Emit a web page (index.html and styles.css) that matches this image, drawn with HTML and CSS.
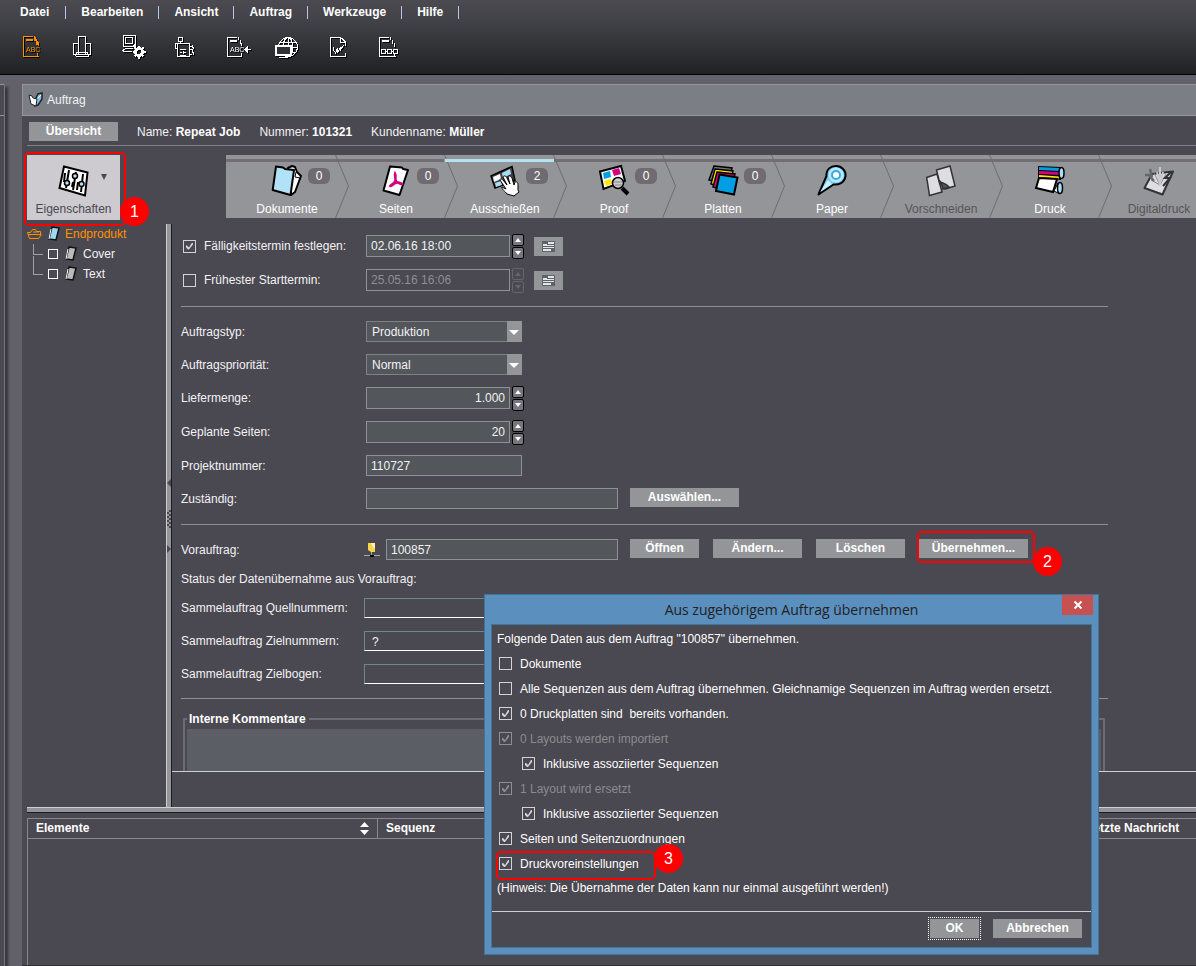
FILE: index.html
```html
<!DOCTYPE html>
<html lang="de">
<head>
<meta charset="utf-8">
<title>Auftrag</title>
<link rel="stylesheet" href="styles.css">
</head>
<body>
<header class="app-header">
  <nav class="menu">
    <button>Datei</button><button>Bearbeiten</button><button>Ansicht</button><button>Auftrag</button><button>Werkzeuge</button><button>Hilfe</button>
  </nav>
  <div class="toolbar">
    <button class="tool active" aria-label="Auftrag"><svg viewBox="0 0 26 24"><path d="M14 1.500H4.500v20H20M18.500 18v3M15.500 1v4M17.500 4v4M19.500 7v4"/><path d="M7 5h7M16 2v4M18 6v4" stroke-width="2"/><text x="7" y="17">ABC</text></svg></button>
    <button class="tool" aria-label="Stapel"><svg viewBox="0 0 26 24"><path d="M8.500 19V1.500h7V19M8 8.500H3.500v11h17v-11H16M5.500 21.500h13M6.500 19v-1.500h11V19M5.500 20v1M18.500 20v1"/></svg></button>
    <button class="tool" aria-label="System"><svg viewBox="0 0 26 24"><path d="M2.500 .500h12v11h-12zM4.500 2.500h7v6h-7zM14.500 9l-2 2M3.500 13.500h8M1.500 16.500h9M3.500 14l-2 2"/><circle cx="18" cy="17" r="3.500" stroke-width="3"/><path d="M18 10.500v3M18 20.500v3M11.500 17h3M21.500 17h3M13.500 12.500l2 2M20.500 19.500l2 2M13.500 21.500l2-2M20.500 14.500l2-2" stroke-width="2"/></svg></button>
    <button class="tool" aria-label="Maschine"><svg viewBox="0 0 26 24"><path d="M6.500 2.500h4v4h-4zM3 8.500h15M5.500 9v12.500h12V9M3.500 9v4h2M8 14.500h6M8 17.500h2M12 17.500h2M8 20.500h6M11 16v3M18 11.500h2M20.500 10v3M18 14.500h2M20.500 14v4M18 19.500h2M21.500 12v2M21.500 17v3M8.500 6v3"/></svg></button>
    <button class="tool" aria-label="Import"><svg viewBox="0 0 26 24"><path d="M14 2.500H4.500v19H19M18.500 18v3M15.500 2v3M17.500 5v4M18.500 8v3M21 14.500h7M24.500 11v7M23.500 12v5M22.500 13v3"/><path d="M7 6h7" stroke-width="2"/><text x="7" y="17">ABC</text></svg></button>
    <button class="tool" aria-label="Portal"><svg viewBox="0 0 26 24"><circle cx="14" cy="12" r="9.500"/><ellipse cx="14" cy="12" rx="5" ry="9.500"/><path d="M14 2v20M6 7.500h16M5 12h19M8 17.500h14"/><path d="M2 11h15v9H2z" fill="#303135" stroke-width="2"/><path d="M5 22.500h9"/></svg></button>
    <button class="tool" aria-label="Bericht"><svg viewBox="0 0 26 24"><path d="M15 2.500H5.500v19h15V18M15.500 2v5.500h5M16 3.500h1v1h1v1h1v1h1v4"/><path d="M8.500 12v3l2 3 2-5v5l3-6v3l3-5"/></svg></button>
    <button class="tool" aria-label="Ablauf"><svg viewBox="0 0 26 24"><path d="M13 2.500H3.500v19h16M14.500 2v3M16.500 5v4M18.500 8v4M5.500 14.500h4v4h-4zM11.500 14.500h4v4h-4zM17.500 14.500h4v4h-4zM9 16.500h3M15 16.500h3M18.500 19v2"/><path d="M6 6h7" stroke-width="2"/></svg></button>
  </div>
</header>

<div class="workspace">
  <aside class="side-strip"><div class="side-strip-head"></div></aside>
  <main class="job">
    <h1 class="job-title"><svg viewBox="0 0 16 16" width="16" height="16"><path d="M8 6l2-4 4-1v6l-4 6-3 1z" fill="#7cc4e8" stroke="#222" stroke-width="1.500"/><path d="M1 3l3 1 1 2 4 1-1 7-5-2z" fill="#fff" stroke="#222"/><path d="M10 6l3-3" stroke="#fff"/></svg>Auftrag</h1>
    <div class="job-info">
      <button class="btn w-90">Übersicht</button>
      <span>Name: <b>Repeat Job</b></span><span>Nummer: <b>101321</b></span><span>Kundenname: <b>Müller</b></span>
    </div>
    <div class="stages">
      <div class="marked prop-wrap">
        <button class="prop">
          <svg viewBox="0 0 32 32"><path d="M6 2.500l23.500 6-2.500 23L1.500 24z" fill="#fff" stroke="#000" stroke-width="2"/><path d="M11 6L8 24M18 8l-3 18M25 10l-2 18M7 9l-1 9M15 18l-1 5M20 18l-1 8" stroke="#000" stroke-width="2"/><g fill="#b5e2f8" stroke="#000" stroke-width="1.500"><circle cx="9" cy="19" r="2.500"/><circle cx="17" cy="12" r="2.500"/><circle cx="23.500" cy="20" r="2.500"/></g></svg>
          <span class="caret"></span>
          <span>Eigenschaften</span>
        </button>
        <span class="pin pin-1">1</span>
      </div>
      <div class="steps">
        <button class="step"><svg viewBox="0 0 32 32"><path d="M17 4l4-2 3 1 2 5 4 4-6 16-4 3z" fill="#fff" stroke="#000" stroke-width="2" stroke-linejoin="round"/><path d="M25 8l-1 5 5 1" stroke="#000" fill="none"/><path d="M5 2.500l7 1 2 1.500 9 1L19.500 31 1.700 26z" fill="#b2e2f8" stroke="#000" stroke-width="2" stroke-linejoin="round"/></svg><span>Dokumente</span><i class="count">0</i></button>
        <button class="step"><svg viewBox="0 0 32 32"><path d="M10 2.500l12 1 1 1.500 5 1-8.500 25-16-4.500z" fill="#fff" stroke="#000" stroke-width="2" stroke-linejoin="round"/><path d="M15 9c-1 3 1 5 0 8-1 3-4 3-5 5 2 1 3-2 6-3 3-1 4 2 6 1-1-2-3-1-5-2-3-2 0-6-2-9z" fill="none" stroke="#d6007f" stroke-width="2"/></svg><span>Seiten</span><i class="count">0</i></button>
        <button class="step current"><svg viewBox="0 0 32 32"><path d="M2 12L23 2.500l3 14L6 24z" fill="#444" stroke="#000" stroke-width="1.500"/><path d="M4 13l7-3 1 5-7 3z" fill="#fff"/><path d="M13 9l8-4 1 5-8 4z" fill="#a9dcf5"/><path d="M6 19l6-2 1 4-6 2z" fill="#a9dcf5"/><path d="M18 30c-2-3-6-5-5-7l4 2-6-9c0-2 2-1 3 0l4 5-4-8c1-2 3-1 4 1l3 6-2-7c1-2 3-1 4 1l2 7 1-3c2-1 3 1 3 3v5l1 2-5 4z" fill="#fff" stroke="#000"/></svg><span>Ausschießen</span><i class="count">2</i></button>
        <button class="step"><svg viewBox="0 0 32 32"><path d="M2 7.500L23 2l4 15-21.500 8z" fill="#fff" stroke="#000" stroke-width="2"/><path d="M5 9l7-2 1 6-7 2z" fill="#009fe3"/><path d="M14 6l7-2 2 6-7 2z" fill="#d6007f"/><path d="M6 17l7-2 1 5-6 2z" fill="#ffe900"/><circle cx="20" cy="19" r="5.500" fill="#ccc" stroke="#000" stroke-width="1.500"/><path d="M16 18h8M17 21h7" stroke="#888"/><path d="M24 24l6 6" stroke="#000" stroke-width="4"/></svg><span>Proof</span><i class="count">0</i></button>
        <button class="step"><svg viewBox="0 0 32 32" stroke="#000" stroke-width="1.500"><path d="M7 2l18 2-4 16L2 16z" fill="#777"/><path d="M8 5l18 2-4 17L4 20z" fill="#ffe900"/><path d="M10 8l18 2-4 18L6 23z" fill="#d6007f"/><path d="M12.500 10.500l18 3L27 30.500 9 27z" fill="#009fe3" stroke-width="2"/></svg><span>Platten</span><i class="count">0</i></button>
        <button class="step"><svg viewBox="0 0 32 32"><path d="M2.500 30.500L10.500 12C10 5 15 2 20 2c6 0 10 5 9.500 10-1 7-7 9-12 8.500z" fill="#79cdf3" stroke="#000" stroke-width="2" stroke-linejoin="round"/><path d="M4 28l8-12 4 4z" fill="#c9efff"/><circle cx="20" cy="11" r="7.500" fill="#b9e8fc"/><circle cx="20" cy="11" r="4" fill="#fff" stroke="#36a9e1" stroke-width="2"/></svg><span>Paper</span></button>
        <button class="step off"><svg viewBox="0 0 32 32" fill="#dddde3" stroke="#333" stroke-width="1.500"><path d="M1.700 13.500L12 10l5 18-12.500 3.500z"/><path d="M11.500 6L25 2l5 20-10 3-6-9z"/><path d="M14 17c3 3 6 1 10 6l-6 2-1-4z" fill="#555"/></svg><span>Vorschneiden</span></button>
        <button class="step"><svg viewBox="0 0 32 32"><path d="M4 2l23 1v13L4 13z" fill="#000"/><path d="M5 4.500l21 1" stroke="#009fe3" stroke-width="3"/><path d="M5 8.500l21 1" stroke="#d6007f" stroke-width="3"/><path d="M5 12l20 1.500" stroke="#ffe900" stroke-width="2"/><ellipse cx="27.500" cy="9" rx="2.500" ry="5.500" fill="#a9dcf5" stroke="#000" stroke-width="1.500"/><path d="M5 14l18 1-4 13-17-4z" fill="#fff" stroke="#000" stroke-width="2"/><path d="M20 27l4-8 2 11z" fill="#fff" stroke="#000"/><ellipse cx="26" cy="24" rx="2.500" ry="5.500" fill="#a9dcf5" stroke="#000" stroke-width="1.500"/></svg><span>Druck</span></button>
        <button class="step off"><svg viewBox="0 0 32 32"><path d="M9 10l21-2.500-10.500 23L1.500 24z" fill="#dddde3" stroke="#333" stroke-width="2" stroke-linejoin="round"/><path d="M17 21l-6-12M17 21l6-11M17 21l-9-5" stroke="#888" fill="none"/><path d="M2 11h4l5 6M7 5l2 8" stroke="#666" stroke-width="2.500" fill="none"/><path d="M17 3v18M14 8l3 11 3-11" stroke="#c9c9cd" stroke-width="2" fill="none"/><path d="M28 8l-6 6h5l-7 8" stroke="#333" stroke-width="2" fill="none"/></svg><span>Digitaldruck</span></button>
      </div>
    </div>

    <div class="split">
      <ul class="tree">
        <li class="root"><svg viewBox="0 0 16 12" width="16" height="12"><path d="M2.500 10.500l-2-6h3l2-3h3l1 2h4v3M2.500 10.500h9l3-4H1M6 4h6" fill="none" stroke="#ff9100"/></svg><svg class="book" viewBox="0 0 14 16"><path d="M5 1l7 1-3 12-7-1z" fill="#9bd8f2" stroke="#111" stroke-width="1.500"/><path d="M4 3L2 13" stroke="#fff"/></svg>Endprodukt</li>
        <li class="leaf"><input type="checkbox" id="t1"><label for="t1"><svg class="book" viewBox="0 0 14 16"><path d="M5 1l7 1-3 12-7-1z" fill="#bbb" stroke="#111" stroke-width="1.500"/><path d="M4 3L2 13" stroke="#fff"/></svg>Cover</label></li>
        <li class="leaf"><input type="checkbox" id="t2"><label for="t2"><svg class="book" viewBox="0 0 14 16"><path d="M5 1l7 1-3 12-7-1z" fill="#bbb" stroke="#111" stroke-width="1.500"/><path d="M4 3L2 13" stroke="#fff"/></svg>Text</label></li>
      </ul>
      <div class="v-splitter"><i class="tri-l"></i><i class="grip"></i><i class="tri-r"></i></div>
      <form class="form">
        <div class="form-scroll">
        <section class="group">
          <div class="row tall"><span class="label"><input type="checkbox" id="due" checked><label for="due">Fälligkeitstermin festlegen:</label></span><input class="field num" aria-label="Fälligkeitstermin" value="02.06.16 18:00"><span class="spin"><button type="button" aria-label="mehr"></button><button type="button" aria-label="weniger"></button></span><button type="button" class="cal" aria-label="Kalender"><svg viewBox="0 0 13 11"><path d="M0 0h13v11H0z" fill="#5c636b"/><path d="M6 1h6v2H6zM1 3h4v1h7v1H1zM1 6h11v1H1zM1 8h8v2H1z" fill="#e3e5e8"/></svg></button></div>
          <div class="row tall disabled"><span class="label"><input type="checkbox" id="early"><label for="early">Frühester Starttermin:</label></span><input class="field num" aria-label="Starttermin" value="25.05.16 16:06" disabled><span class="spin"><button type="button" aria-label="mehr" disabled></button><button type="button" aria-label="weniger" disabled></button></span><button type="button" class="cal" aria-label="Kalender"><svg viewBox="0 0 13 11"><path d="M0 0h13v11H0z" fill="#5c636b"/><path d="M6 1h6v2H6zM1 3h4v1h7v1H1zM1 6h11v1H1zM1 8h8v2H1z" fill="#e3e5e8"/></svg></button></div>
        </section>
        <section class="group">
          <div class="row"><label class="label" for="typ">Auftragstyp:</label><span class="combo"><select id="typ"><option>Produktion</option></select></span></div>
          <div class="row"><label class="label" for="prio">Auftragspriorität:</label><span class="combo"><select id="prio"><option>Normal</option></select></span></div>
          <div class="row tall"><label class="label" for="qty">Liefermenge:</label><input class="field num right" id="qty" value="1.000"><span class="spin"><button type="button" aria-label="mehr"></button><button type="button" aria-label="weniger"></button></span></div>
          <div class="row tall"><label class="label" for="pages">Geplante Seiten:</label><input class="field num right" id="pages" value="20"><span class="spin"><button type="button" aria-label="mehr"></button><button type="button" aria-label="weniger"></button></span></div>
          <div class="row"><label class="label" for="proj">Projektnummer:</label><input class="field mid" id="proj" value="110727"></div>
          <div class="row"><label class="label" for="resp">Zuständig:</label><input class="field long" id="resp"><button type="button" class="btn w-109">Auswählen...</button></div>
        </section>
        <section class="group">
          <div class="row"><label class="label short" for="prev">Vorauftrag:</label><svg class="link-icon" viewBox="0 0 16 16"><path d="M4 1h7v9H7L4 8z" fill="#f7d547"/><path d="M7 1h4v6l-2-2z" fill="#fff3b8"/><path d="M7.500 10v3M0 13.500h16" stroke="#a8a8a8"/><path d="M6 13h4v2H6z" fill="#000"/></svg><input class="field prev" id="prev" value="100857"><span class="btns"><button type="button" class="btn w-69">Öffnen</button><button type="button" class="btn w-90">Ändern...</button><button type="button" class="btn w-90">Löschen</button><span class="marked take"><button type="button" class="btn w-109">Übernehmen...</button><span class="pin pin-2">2</span></span></span></div>
          <div class="row slim"><span>Status der Datenübernahme aus Vorauftrag:</span></div>
          <div class="row"><label class="label short" for="src">Sammelauftrag Quellnummern:</label><input class="sunken" id="src"></div>
          <div class="row"><label class="label short" for="dst">Sammelauftrag Zielnummern:</label><input class="sunken" id="dst" value="?"></div>
          <div class="row"><label class="label short" for="sheet">Sammelauftrag Zielbogen:</label><input class="sunken" id="sheet"></div>
        </section>
        <fieldset class="comments"><legend>Interne Kommentare</legend><textarea aria-label="Interne Kommentare"></textarea></fieldset>
        </div>
        <div class="form-foot"></div>
      </form>
    </div>
    <div class="h-splitter"></div>
    <div class="grid-wrap">
      <table class="grid">
        <colgroup><col class="c-el"><col class="c-seq"><col></colgroup>
        <thead><tr><th><span class="sort">Elemente<svg viewBox="0 0 9 13" width="9" height="13"><path d="M0 5l4.500-5L9 5zM0 8h9l-4.500 5z" fill="#fff"/></svg></span></th><th>Sequenz</th><th>Letzte Nachricht</th></tr></thead>
      </table>
    </div>
  </main>
</div>

<div class="dialog" role="dialog" aria-labelledby="dlg-title">
  <div class="dialog-bar"><h2 id="dlg-title">Aus zugehörigem Auftrag übernehmen</h2><button class="close" aria-label="Schließen"><svg viewBox="0 0 8 8" width="8" height="8"><path d="M0.500 0.500l7 7M7.500 0.500l-7 7" stroke="#fff" stroke-width="2"/></svg></button></div>
  <div class="dialog-body">
    <div class="options">
      <p>Folgende Daten aus dem Auftrag "100857" übernehmen.</p>
      <div class="opt"><input type="checkbox" id="o1"><label for="o1">Dokumente</label></div>
      <div class="opt"><input type="checkbox" id="o2"><label for="o2">Alle Sequenzen aus dem Auftrag übernehmen. Gleichnamige Sequenzen im Auftrag werden ersetzt.</label></div>
      <div class="opt"><input type="checkbox" id="o3" checked><label for="o3">0 Druckplatten sind&nbsp; bereits vorhanden.</label></div>
      <div class="opt"><input type="checkbox" id="o4" checked disabled><label for="o4">0 Layouts werden importiert</label></div>
      <div class="opt sub"><input type="checkbox" id="o5" checked><label for="o5">Inklusive assoziierter Sequenzen</label></div>
      <div class="opt"><input type="checkbox" id="o6" checked disabled><label for="o6">1 Layout wird ersetzt</label></div>
      <div class="opt sub"><input type="checkbox" id="o7" checked><label for="o7">Inklusive assoziierter Sequenzen</label></div>
      <div class="opt"><input type="checkbox" id="o8" checked><label for="o8">Seiten und Seitenzuordnungen</label></div>
      <div class="opt marked presets"><input type="checkbox" id="o9" checked><label for="o9">Druckvoreinstellungen</label><span class="pin pin-3">3</span></div>
      <p>(Hinweis: Die Übernahme der Daten kann nur einmal ausgeführt werden!)</p>
    </div>
    <div class="actions"><button class="btn w-49 default">OK</button><button class="btn w-90">Abbrechen</button></div>
  </div>
</div>
</body>
</html>
```
FILE: styles.css
```css
* { box-sizing: border-box; }
body {
  margin: 0;
  height: 100vh;
  display: flex;
  flex-direction: column;
  overflow: hidden;
  position: relative;
  background: #626069;
  color: #f2f2f4;
  font: 12px/16px "Liberation Sans", Arial, sans-serif;
}
button, input, select, textarea { font: inherit; color: inherit; margin: 0; border-radius: 0; }
button { border: 0; padding: 0; background: none; white-space: nowrap; }
svg { display: block; overflow: visible; flex: none; }
h1, h2, p, ul { margin: 0; padding: 0; font: inherit; list-style: none; }

.app-header {
  flex: none;
  height: 75px;
  background: linear-gradient(#4b4a51, #3f4045 35%, #1f2123);
  border-bottom: 1px solid #000;
}
.menu { display: flex; padding: 6px 0 0 5px; }
.menu button {
  height: 13px;
  line-height: 13px;
  padding: 0 15px;
  border-right: 1px solid #b7c4ee;
  font-weight: bold;
  color: #fff;
}
.menu button:first-child { padding-right: 16px; }
.toolbar { display: flex; padding: 16px 0 0 6px; }
.tool { width: 51px; display: flex; padding-left: 13px; }
.tool svg { width: 26px; height: 24px; fill: none; stroke: #fff; shape-rendering: crispEdges; filter: drop-shadow(1px 1px 0 #000); }
.tool.active svg { stroke: #ff9100; }
.tool text { font: 7px "Liberation Sans", Arial, sans-serif; fill: #fff; stroke: none; }
.tool.active text { fill: #ff9100; }

.workspace { flex: 1; min-height: 0; display: flex; padding-top: 9px; }
.side-strip {
  width: 5px;
  margin-right: 17px;
  background: #4a4850;
  border-right: 1px solid #77767b;
  box-shadow: 3px 3px 3px #35343a;
}
.side-strip-head { height: 32px; border: 1px solid #96979b; border-width: 1px 0; }
.job { flex: 1; min-width: 0; display: flex; flex-direction: column; background: #4a4850; border-bottom: 1px solid #333236; }
.job-title {
  flex: none;
  height: 32px;
  display: flex;
  align-items: center;
  gap: 3px;
  padding-left: 5px;
  background: #7b7e85;
  border: 1px solid #96979b;
  border-right: 0;
}
.job-info {
  flex: none;
  height: 30px;
  margin-left: 5px;
  padding: 3px 0 0 2px;
  display: flex;
  align-items: center;
  gap: 19px;
  border-bottom: 1px solid #807f84;
}
.job-info .btn { margin-bottom: 2px; }
.job-info b { color: #fff; }
.btn { height: 19px; line-height: 19px; background: #949599; color: #fff; font-weight: bold; text-align: center; flex: none; }
.w-49 { width: 49px; }
.w-69 { width: 69px; }
.w-90 { width: 89px; }
.w-109 { width: 109px; }

.stages { flex: none; display: flex; margin: 9px 0 0 5px; height: 69px; }
.marked { position: relative; }
.marked::after {
  content: "";
  position: absolute;
  inset: -3px -6px;
  border: 2px solid #f00;
  border-radius: 5px;
  pointer-events: none;
}
.pin {
  position: absolute;
  z-index: 1;
  width: 29px;
  height: 29px;
  border-radius: 50%;
  background: #f00;
  color: #fff;
  font: 16px/29px "Liberation Sans", Arial, sans-serif;
  text-align: center;
}
.prop-wrap { width: 93px; height: 65px; margin-right: 106px; }
.prop-wrap::after { inset: -3px -6px -6px -3px; }
.pin-1 { right: -29px; bottom: -6px; }
.prop {
  position: relative;
  width: 100%;
  height: 100%;
  background: #cdcbd0;
  color: #4a4850;
  display: flex;
  flex-direction: column;
  align-items: center;
  padding-top: 9px;
}
.prop svg, .step svg { width: 32px; height: 32px; margin-bottom: 5px; }
.caret { position: absolute; left: 74px; top: 19px; border: solid transparent; border-width: 6px 3px 0; border-top-color: #4a4850; }
.steps { flex: 1; min-width: 0; display: flex; height: 63px; overflow: hidden; background: #949599; }
.step {
  position: relative;
  flex: none;
  width: 109px;
  height: 63px;
  padding: 9px 0 0 13px;
  display: flex;
  flex-direction: column;
  align-items: center;
  background: linear-gradient(#726e72, #726e72) 0 4px / 100% 3px no-repeat;
  color: #fff;
}
.step.current { background: none; z-index: 1; }
.step.current::after { content: ""; position: absolute; left: 1px; right: -1px; top: 4px; height: 3px; background: #b5e2f2; }
.step.off { color: #56545b; }
.step + .step::before {
  content: "";
  position: absolute;
  left: 0;
  top: 0;
  width: 14px;
  height: 63px;
  background: #6d6b72;
  clip-path: polygon(0 0, 1px 0, 14px 31px, 1px 63px, 0 63px, 13px 31px);
}
.count {
  position: absolute;
  left: 82px;
  top: 13px;
  width: 22px;
  height: 16px;
  border-radius: 6px;
  background: #6f6b70;
  font-style: normal;
  text-align: center;
}

.split { flex: none; display: flex; height: 583px; margin-left: 5px; }
.tree { width: 139px; flex: none; }
.tree li { display: flex; align-items: center; height: 20px; position: relative; }
.root { color: #ff9100; gap: 4px; }
.book { width: 14px; height: 16px; }
.leaf { padding-left: 21px; }
.leaf label { display: flex; align-items: center; gap: 5px; margin-left: 6px; }
.leaf::before { content: ""; position: absolute; left: 6px; top: -8px; width: 9px; height: 18px; border: 1px solid #a0a0a4; border-width: 0 0 1px 1px; }
.root + .leaf::before { top: 0; height: 10px; }
.v-splitter {
  flex: none;
  width: 6px;
  display: flex;
  flex-direction: column;
  align-items: center;
  padding-top: 255px;
  background: #949599;
  border-left: 1px solid #d0ced2;
  border-right: 1px solid #1c1c1f;
}
.tri-l { border: 4px solid transparent; border-left: 0; border-right-color: #4a4850; }
.tri-r { border: 4px solid transparent; border-right: 0; border-left-color: #4a4850; }
.grip { width: 4px; height: 18px; margin: 23px 0 17px; background: repeating-conic-gradient(#4a4850 0 25%, #949599 0 50%) 0 0 / 4px 4px; }

input[type="checkbox"] {
  appearance: none;
  flex: none;
  width: 13px;
  height: 13px;
  border: 1px solid #d3d2d6;
  position: relative;
}
.leaf input[type="checkbox"] { width: 10px; height: 10px; border-color: #fff; }
input[type="checkbox"]:checked::before {
  content: "";
  position: absolute;
  inset: 2px;
  background: #d3d2d6;
  clip-path: polygon(0 3px, 1px 3px, 3px 5px, 6px 0, 7px 0, 7px 2px, 3px 7px, 2px 7px, 0 5px);
}
input[type="checkbox"]:disabled { opacity: 0.5; }
input[type="checkbox"]:disabled + label { color: #8c8b91; }

.form { flex: 1; min-width: 0; display: flex; flex-direction: column; }
.form-scroll { flex: 1; min-height: 0; overflow: hidden; padding-left: 9px; border-bottom: 1px solid #d0ced2; }
.form-foot { flex: none; height: 35px; }
.group { margin-right: 88px; padding: 8px 0; border-bottom: 1px solid #8f8e93; }
.group:first-child { padding-top: 5px; }
.group:nth-child(-n+2) { padding-bottom: 9px; }
.row { display: flex; align-items: center; height: 33px; }
.row.tall { height: 34px; }
.row.slim { height: 25px; }
.label { width: 185px; flex: none; display: flex; align-items: center; white-space: nowrap; }
.label input { margin: 0 8px 0 2px; }
.label.short { width: 183px; }
.field {
  height: 21px;
  padding: 0 4px;
  background: #53565a;
  border: 1px solid #8f9094;
  outline: 0;
}
.num { width: 144px; height: 22px; }
.mid { width: 156px; }
.long { width: 252px; margin-right: 12px; }
.prev { width: 232px; margin-right: 12px; }
.row .btn { margin-bottom: 2px; }
.right { text-align: right; }
.disabled .field { background: #4a4850; color: #8f8e94; }
.spin { display: flex; flex-direction: column; gap: 1px; margin-left: 2px; }
.spin button { width: 12px; height: 12px; border: 1px solid #000; border-radius: 2px; background: #77757d; display: grid; place-items: center; }
.spin button::before { content: ""; border: 3px solid transparent; border-top: 0; border-bottom: 4px solid #fff; }
.spin button + button::before { border-bottom: 0; border-top: 4px solid #fff; }
.spin button:disabled { background: none; border-color: #66656c; }
.spin button:disabled::before { border-bottom-color: #66656c; border-top-color: #66656c; }
.cal { width: 29px; height: 19px; margin-left: 10px; background: #949599; display: grid; place-items: center; }
.cal svg { width: 13px; height: 11px; }
.combo { position: relative; width: 156px; height: 21px; }
.combo select { appearance: none; width: 100%; height: 100%; padding: 0 20px 0 5px; background: #53565a; border: 1px solid #808186; }
.combo::before { content: ""; position: absolute; right: 0; top: 0; width: 15px; height: 21px; background: #949599; pointer-events: none; }
.combo::after { content: ""; position: absolute; right: 3px; top: 9px; border: 5px solid transparent; border-bottom: 0; border-top-color: #fff; pointer-events: none; }
.link-icon { width: 16px; height: 16px; margin-right: 6px; }
.btns { display: flex; gap: 14px; }
.btns .take { display: flex; }
.take::after { inset: -8px -7px -3px -2px; }
.pin-2 { right: -34px; top: 8px; }
.sunken { width: 254px; height: 20px; padding: 2px 7px 0; background: none; border: 1px solid #6f8590; border-bottom-color: #fff; outline: 0; }
.comments { margin: 13px 91px 0 2px; padding: 3px 2px 0; border: 2px solid #6d6c72; height: 140px; min-width: 0; }
.comments legend { margin: 0; padding: 0 3px 0 2px; font-weight: bold; color: #fff; line-height: 14px; }
.comments textarea { display: block; width: 100%; height: 120px; border: 0; background: #5b5e65; resize: none; }

.h-splitter { flex: none; height: 6px; margin-left: 5px; background: #949599; border-top: 1px solid #d0ced2; border-bottom: 1px solid #1c1c1f; }
.grid-wrap { flex: 1; min-height: 0; margin: 5px 0 0 5px; border: 1px solid #88878c; border-width: 1px 0 0 1px; }
.grid { width: 100%; table-layout: fixed; border-collapse: separate; border-spacing: 0; }
.grid th { height: 20px; padding: 0 8px; text-align: left; color: #fff; border-bottom: 1px solid #88878c; border-right: 1px solid #88878c; line-height: 19px; white-space: nowrap; }
.grid th:last-child { border-right: 0; }
.c-el { width: 350px; }
.c-seq { width: 700px; }
.sort { display: flex; align-items: center; justify-content: space-between; }

.dialog {
  position: absolute;
  left: 484px;
  top: 594px;
  width: 615px;
  padding: 0 6px 6px;
  background: #5a8fbe;
  border: 1px solid #40749a;
}
.dialog-bar { height: 29px; display: flex; position: relative; justify-content: center; }
.dialog-bar h2 { font: 14px/30px "Open Sans", "Noto Sans", sans-serif; color: #222; }
.close { position: absolute; right: -1px; top: 0; width: 31px; height: 20px; background: #c75050; display: grid; place-items: center; }
.dialog-body { background: #4a4850; border: 1px solid #40749a; color: #fff; }
.options { padding: 2px 5px 10px; border-bottom: 1px solid #d0ced2; }
.options p { height: 24px; line-height: 24px; }
.options p:last-child { height: 25px; }
.opt { display: flex; align-items: center; height: 25px; gap: 8px; padding-left: 2px; }
.opt.sub { padding-left: 25px; }
.presets { width: 158px; }
.presets::after { inset: 0 -1px -4px -1px; }
.pin-3 { right: -28px; top: -7px; }
.actions { display: flex; justify-content: flex-end; gap: 14px; padding: 7px 9px 9px; }
.default { outline: 1px dotted #fff; outline-offset: 1px; }
```
